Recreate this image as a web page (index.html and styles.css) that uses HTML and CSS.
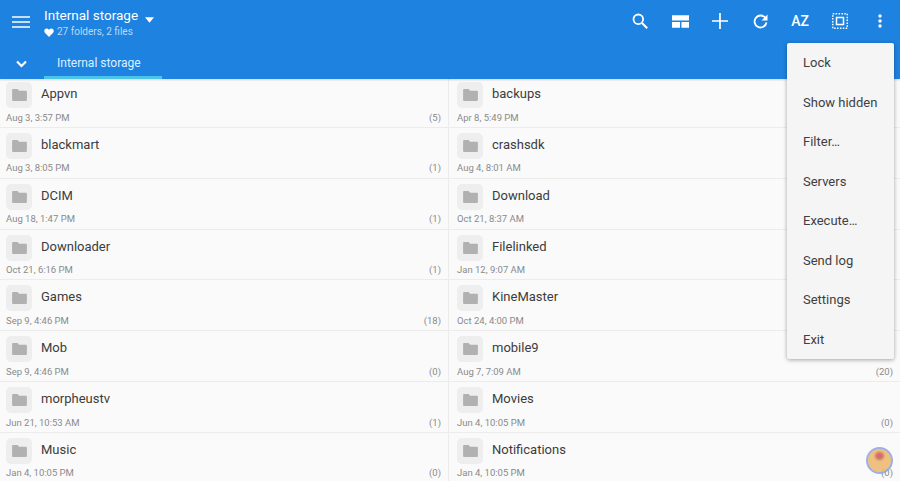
FILE: index.html
```html
<!DOCTYPE html>
<html lang="en">
<head>
    <meta charset="UTF-8">
    <meta name="viewport" content="width=device-width, initial-scale=1.0">
    <title>Internal storage</title>
    <link rel="stylesheet" href="styles.css">
</head>
<body>
    <div class="app">
        <!-- Top bar -->
        <header class="header">
            <div class="toolbar">
                <svg class="menu-icon" width="18" height="12" viewBox="0 0 18 12"><path d="M0 1h18M0 6h18M0 11h18" stroke="#fff" stroke-width="1.700"/></svg>
                <div class="title-block">
                    <div class="title">Internal storage<svg class="title-caret" width="9" height="6" viewBox="0 0 10 6"><path d="M0 0h10L5 6z" fill="#fff"/></svg></div>
                    <div class="subtitle"><svg width="10" height="9" viewBox="0 0 24 22"><path d="M12 22 2 11.500C-3 5 5-3 12 4c7-7 15 1 10 7.500z" fill="#fff"/></svg>27 folders, 2 files</div>
                </div>
                <div class="actions">
                    <div class="action"><svg width="16" height="16" viewBox="0 0 16 16"><circle cx="6.300" cy="6.300" r="4.800" fill="none" stroke="#fff" stroke-width="1.800"/><path d="M10 10l5.200 5.200" stroke="#fff" stroke-width="2"/></svg></div>
                    <div class="action"><svg width="17" height="13" viewBox="0 0 18 13"><path d="M0 0h18v5.500H0zM0 7h8.500v6H0zM10 7h8v6h-8z" fill="#fff"/></svg></div>
                    <div class="action"><svg width="16" height="16" viewBox="0 0 16 16"><path d="M8 0v16M0 8h16" stroke="#fff" stroke-width="1.700"/></svg></div>
                    <div class="action"><svg width="15" height="15" viewBox="0 0 15 15"><path d="M12.600 4.200A6 6 0 1 0 13.500 8.500" fill="none" stroke="#fff" stroke-width="1.800"/><path d="M14.500 0.500v6h-6z" fill="#fff"/></svg></div>
                    <div class="action sort-label">AZ</div>
                    <div class="action"><svg width="16" height="16" viewBox="0 0 16 16"><rect x="0.750" y="0.750" width="14.500" height="14.500" fill="none" stroke="#fff" stroke-width="1.500" stroke-dasharray="1.500 1.400"/><rect x="4.500" y="4.500" width="7" height="7" fill="none" stroke="#fff" stroke-width="1.500"/></svg></div>
                    <div class="action"><svg width="4" height="14" viewBox="0 0 4 14"><circle cx="2" cy="2" r="1.700" fill="#fff"/><circle cx="2" cy="7" r="1.700" fill="#fff"/><circle cx="2" cy="12" r="1.700" fill="#fff"/></svg></div>
                </div>
            </div>
            <div class="tabs">
                <svg class="tabs-chevron" width="11" height="8" viewBox="0 0 11 8"><path d="M1 1.500l4.500 4.500L10 1.500" fill="none" stroke="#fff" stroke-width="2.200"/></svg>
                <div class="tab">Internal storage</div>
            </div>
        </header>

        <!-- Folder list -->
        <div class="file-grid" id="fileGrid"></div>

        <!-- Overflow menu -->
        <div class="popup-menu">
            <div class="menu-item">Lock</div>
            <div class="menu-item">Show hidden</div>
            <div class="menu-item">Filter…</div>
            <div class="menu-item">Servers</div>
            <div class="menu-item">Execute…</div>
            <div class="menu-item">Send log</div>
            <div class="menu-item">Settings</div>
            <div class="menu-item">Exit</div>
        </div>

        <!-- Floating bubble -->
        <div class="bubble"><div class="bubble-spot"></div></div>
    </div>

    <script>
        const folders = [
            ["Appvn", "Aug 3, 3:57 PM", "(5)"],
            ["backups", "Apr 8, 5:49 PM", ""],
            ["blackmart", "Aug 3, 8:05 PM", "(1)"],
            ["crashsdk", "Aug 4, 8:01 AM", ""],
            ["DCIM", "Aug 18, 1:47 PM", "(1)"],
            ["Download", "Oct 21, 8:37 AM", ""],
            ["Downloader", "Oct 21, 6:16 PM", "(1)"],
            ["Filelinked", "Jan 12, 9:07 AM", ""],
            ["Games", "Sep 9, 4:46 PM", "(18)"],
            ["KineMaster", "Oct 24, 4:00 PM", ""],
            ["Mob", "Sep 9, 4:46 PM", "(0)"],
            ["mobile9", "Aug 7, 7:09 AM", "(20)"],
            ["morpheustv", "Jun 21, 10:53 AM", "(1)"],
            ["Movies", "Jun 4, 10:05 PM", "(0)"],
            ["Music", "Jan 4, 10:05 PM", "(0)"],
            ["Notifications", "Jan 4, 10:05 PM", "(0)"]
        ];

        // Build one row per folder
        const grid = document.getElementById("fileGrid");
        folders.forEach(folder => {
            const row = document.createElement("div");
            row.className = "file-row";
            row.innerHTML = `
                <div class="file-top">
                    <div class="file-icon"><svg width="15" height="12" viewBox="0 0 16 13"><path d="M0 1a1 1 0 0 1 1-1h5l1.500 2H15a1 1 0 0 1 1 1v9a1 1 0 0 1-1 1H1a1 1 0 0 1-1-1z" fill="#b1b1b1"/></svg></div>
                    <div class="file-name">${folder[0]}</div>
                </div>
                <div class="file-meta"><span>${folder[1]}</span><span>${folder[2]}</span></div>`;
            grid.appendChild(row);
        });
    </script>
</body>
</html>
```
FILE: styles.css
```css
body {
    margin: 0;
    font-family: Roboto, "Liberation Sans", sans-serif;
    background-color: #fafafa;
}
.app {
    position: relative;
    width: 900px;
    height: 481px;
    overflow: hidden;
}
.header {
    position: relative;
    z-index: 1;
    height: 79px;
    background-color: #1e82e0;
    box-shadow: 0 1px 2px rgba(0, 0, 0, 0.15);
}
.toolbar {
    display: flex;
    align-items: flex-start;
    height: 47px;
    box-sizing: border-box;
    padding-top: 7px;
}
.menu-icon {
    margin: 9px 0 0 12px;
}
.title-block {
    margin-left: 14px;
    color: #fff;
}
.title {
    font-size: 13.5px;
    line-height: 16px;
}
.title-caret {
    margin-left: 7px;
    vertical-align: -3px;
}
.subtitle {
    display: flex;
    align-items: center;
    gap: 3px;
    margin-top: 2px;
    font-size: 10px;
    line-height: 14px;
    color: #bcd9f5;
}
.actions {
    flex: 1;
    display: flex;
    justify-content: flex-end;
    height: 28px;
}
.action {
    display: flex;
    justify-content: center;
    align-items: center;
    width: 40px;
}
.sort-label {
    font-size: 14px;
    font-weight: 500;
    color: #fff;
}
.tabs {
    display: flex;
    align-items: flex-start;
    height: 32px;
}
.tabs-chevron {
    margin: 13px 0 0 16px;
}
.tab {
    margin-left: 17px;
    box-sizing: border-box;
    width: 118px;
    height: 32px;
    padding: 8px 0 0 13px;
    font-size: 12px;
    line-height: 16px;
    color: #dff0ff;
    border-bottom: 3px solid #4cc4ea;
}
/* list is scrolled a little, so the first row slips under the header */
.file-grid {
    display: grid;
    grid-template-columns: 449px 451px;
    grid-auto-rows: 50.85px;
    margin-top: -2px;
}
.file-row {
    box-sizing: border-box;
    padding: 5px 7px 0 6px;
    border-bottom: 1px solid #ececec;
}
.file-row:nth-child(odd) {
    border-right: 1px solid #ececec;
}
.file-row:nth-child(even) {
    padding-left: 8px;
}
.file-top {
    display: flex;
    height: 26px;
}
.file-icon {
    display: flex;
    justify-content: center;
    align-items: center;
    width: 26px;
    height: 26px;
    border-radius: 5px;
    background-color: #eeeeee;
}
.file-name {
    margin-left: 9px;
    font-size: 13px;
    line-height: 24px;
    color: #3c3c3c;
}
.file-meta {
    display: flex;
    justify-content: space-between;
    margin-top: 2.5px;
    font-size: 9.5px;
    line-height: 13px;
    color: #8a8a8a;
}
.popup-menu {
    position: absolute;
    z-index: 2;
    top: 43px;
    left: 787px;
    width: 107px;
    height: 316px;
    background-color: #f5f5f5;
    border-radius: 2px;
    box-shadow: 0 1px 4px rgba(0, 0, 0, 0.35);
}
.menu-item {
    height: 39.5px;
    padding-left: 16px;
    font-size: 13px;
    line-height: 39.5px;
    color: #3f3f3f;
}
.bubble {
    position: absolute;
    z-index: 2;
    top: 447px;
    left: 866px;
    width: 23px;
    height: 23px;
    border: 2px solid #8ca6e0;
    border-radius: 50%;
    background-color: #edb76e;
    opacity: 0.85;
}
.bubble-spot {
    width: 9px;
    height: 8px;
    margin: 3px 0 0 7px;
    border-radius: 50%;
    background-color: #c8574e;
    filter: blur(1px);
}
```
